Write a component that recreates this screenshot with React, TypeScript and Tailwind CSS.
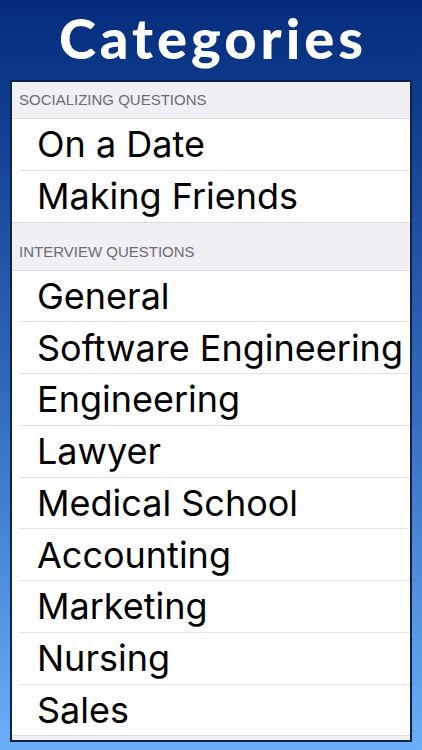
const sections = [
  {
    title: 'SOCIALIZING QUESTIONS',
    first: true,
    items: ['On a Date', 'Making Friends'],
  },
  {
    title: 'INTERVIEW QUESTIONS',
    first: false,
    items: [
      'General',
      'Software Engineering',
      'Engineering',
      'Lawyer',
      'Medical School',
      'Accounting',
      'Marketing',
      'Nursing',
      'Sales',
    ],
  },
];

export default function App() {
  return (
    <div className="h-[750px] w-[422px] overflow-hidden bg-gradient-to-b from-[#052c7c] via-[#2f67bb] to-[#6aaff8] flex flex-col">
      <div className="h-[80px] flex items-center justify-center">
        <h1 className="text-white text-[56px] leading-none font-black tracking-[4px] font-['Lato',sans-serif] pb-[4px] pl-[4px]">
          Categories
        </h1>
      </div>

      <div className="mx-[10px] h-[662px] border-2 border-[#0f2347] bg-[#efeff4] flex flex-col font-['Inter','Liberation_Sans',sans-serif]">
        {sections.map((section) => (
          <div key={section.title}>
            <div
              className={
                'flex items-end pl-[7px] pb-[9px] ' +
                (section.first ? 'h-[36px]' : 'h-[47px]')
              }
            >
              <span className="text-[15px] leading-[18px] text-[#6d6d72] font-['Liberation_Sans',sans-serif]">
                {section.title}
              </span>
            </div>
            <div className="bg-white border-t border-[#dcdce0]">
              {section.items.map((item, i) => (
                <div
                  key={item}
                  className={
                    'h-[51.75px] flex items-center ' +
                    (i === section.items.length - 1
                      ? 'border-b border-[#dcdce0]'
                      : 'pl-[7px]')
                  }
                >
                  <div
                    className={
                      'h-full w-full flex items-center ' +
                      (i === section.items.length - 1
                        ? 'pl-[25px]'
                        : 'pl-[18px] border-b border-[#e3e3e6]')
                    }
                  >
                    <span className="text-[36px] leading-none text-black whitespace-nowrap">
                      {item}
                    </span>
                  </div>
                </div>
              ))}
            </div>
          </div>
        ))}
      </div>
    </div>
  );
}
